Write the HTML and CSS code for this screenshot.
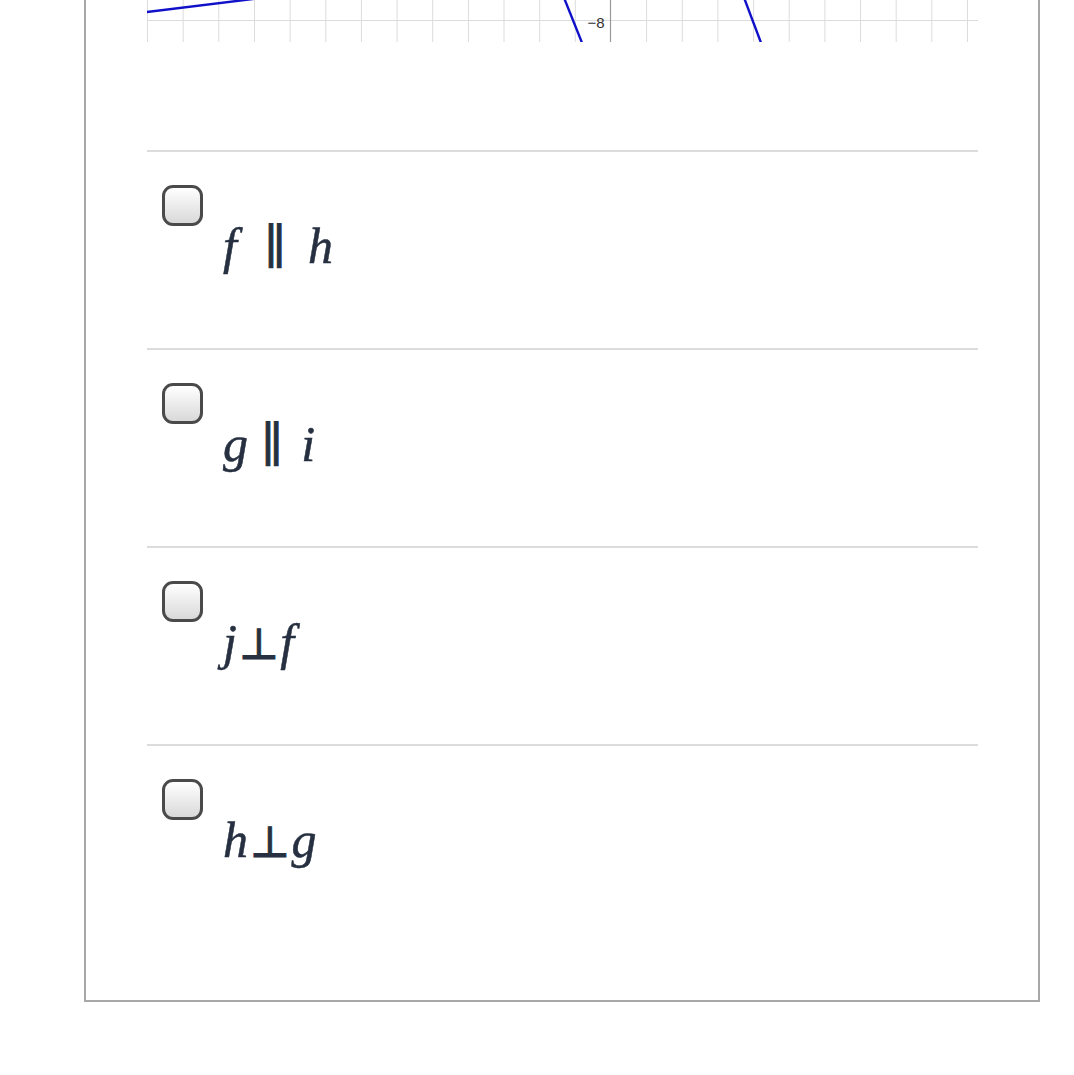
FILE: index.html
```html
<!DOCTYPE html>
<html>
<head>
<meta charset="utf-8">
<link rel="stylesheet" href="styles.css">
</head>
<body>
<div class="page">
  <div class="card">
    <div class="graph">
      <svg width="831" height="42" viewBox="0 0 831 42">
        <g stroke="#dcdcdc" stroke-width="1">
          <line x1="0.5" y1="0" x2="0.5" y2="42"/>
          <line x1="36.2" y1="0" x2="36.2" y2="42"/>
          <line x1="71.8" y1="0" x2="71.8" y2="42"/>
          <line x1="107.5" y1="0" x2="107.5" y2="42"/>
          <line x1="143.1" y1="0" x2="143.1" y2="42"/>
          <line x1="178.8" y1="0" x2="178.8" y2="42"/>
          <line x1="214.4" y1="0" x2="214.4" y2="42"/>
          <line x1="250.1" y1="0" x2="250.1" y2="42"/>
          <line x1="285.7" y1="0" x2="285.7" y2="42"/>
          <line x1="321.4" y1="0" x2="321.4" y2="42"/>
          <line x1="357" y1="0" x2="357" y2="42"/>
          <line x1="392.7" y1="0" x2="392.7" y2="42"/>
          <line x1="428.3" y1="0" x2="428.3" y2="42"/>
          <line x1="499.6" y1="0" x2="499.6" y2="42"/>
          <line x1="535.3" y1="0" x2="535.3" y2="42"/>
          <line x1="570.9" y1="0" x2="570.9" y2="42"/>
          <line x1="606.6" y1="0" x2="606.6" y2="42"/>
          <line x1="642.2" y1="0" x2="642.2" y2="42"/>
          <line x1="677.9" y1="0" x2="677.9" y2="42"/>
          <line x1="713.5" y1="0" x2="713.5" y2="42"/>
          <line x1="749.2" y1="0" x2="749.2" y2="42"/>
          <line x1="784.8" y1="0" x2="784.8" y2="42"/>
          <line x1="820.5" y1="0" x2="820.5" y2="42"/>
          <line x1="0" y1="20.5" x2="831" y2="20.5"/>
        </g>
        <line x1="463.5" y1="0" x2="463.5" y2="42" stroke="#999" stroke-width="1.2"/>
        <text x="457.5" y="28" class="tick" text-anchor="end">−8</text>
        <g stroke="#1010c8" stroke-width="2.4" fill="none">
          <line x1="-10" y1="13.2" x2="110" y2="-1.5"/>
          <line x1="417.5" y1="-1" x2="435.5" y2="44"/>
          <line x1="597.5" y1="-1" x2="614.5" y2="44"/>
        </g>
      </svg>
    </div>
    <div class="opt">
      <span class="box"></span>
      <div class="math"><i>f</i><span class="par">∥</span><i>h</i></div>
    </div>
    <div class="opt">
      <span class="box"></span>
      <div class="math"><i>g</i><span class="par par-g">∥</span><i>i</i></div>
    </div>
    <div class="opt">
      <span class="box"></span>
      <div class="math"><i>j</i><span class="perp">⊥</span><i>f</i></div>
    </div>
    <div class="opt last">
      <span class="box"></span>
      <div class="math"><i>h</i><span class="perp">⊥</span><i>g</i></div>
    </div>
  </div>
</div>
</body>
</html>
```
FILE: styles.css
```css
html, body {
  margin: 0;
  padding: 0;
  background: #fff;
}
.page {
  padding: 0 34px 0 84px;
}
.card {
  border: 2px solid #a8a8a8;
  border-top: none;
  padding: 0 60px 0 61px;
}
.graph {
  height: 42px;
  overflow: hidden;
  margin-bottom: 108px;
}
.graph svg {
  display: block;
}
.tick {
  font-family: "Liberation Sans", Arial, sans-serif;
  font-size: 15px;
  fill: #333;
}
.opt {
  border-top: 2px solid #dcdcdc;
  height: 198px;
  box-sizing: border-box;
  padding-top: 33px;
}
.opt.last {
  height: 256px;
}
.box {
  display: block;
  width: 41px;
  height: 41px;
  box-sizing: border-box;
  margin-left: 15px;
  border: 3px solid #4a4a4a;
  border-radius: 11px;
  background: linear-gradient(#ffffff, #d9d9d9);
}
.math {
  margin-left: 76px;
  font-family: "Liberation Serif", "Times New Roman", serif;
  font-size: 50px;
  line-height: 40px;
  color: #263040;
  -webkit-text-stroke: 0.5px #263040;
}
.math i {
  font-style: italic;
}
.par {
  font-family: "DejaVu Serif", serif;
  font-size: 48px;
  -webkit-text-stroke: 0.9px #263040;
  margin: 0 22px 0 27px;
}
.par-g {
  margin: 0 18px 0 13px;
}
.perp {
  font-family: "DejaVu Serif", serif;
  font-size: 44px;
  -webkit-text-stroke: 0.8px #263040;
  margin: 0 1px;
}
```
